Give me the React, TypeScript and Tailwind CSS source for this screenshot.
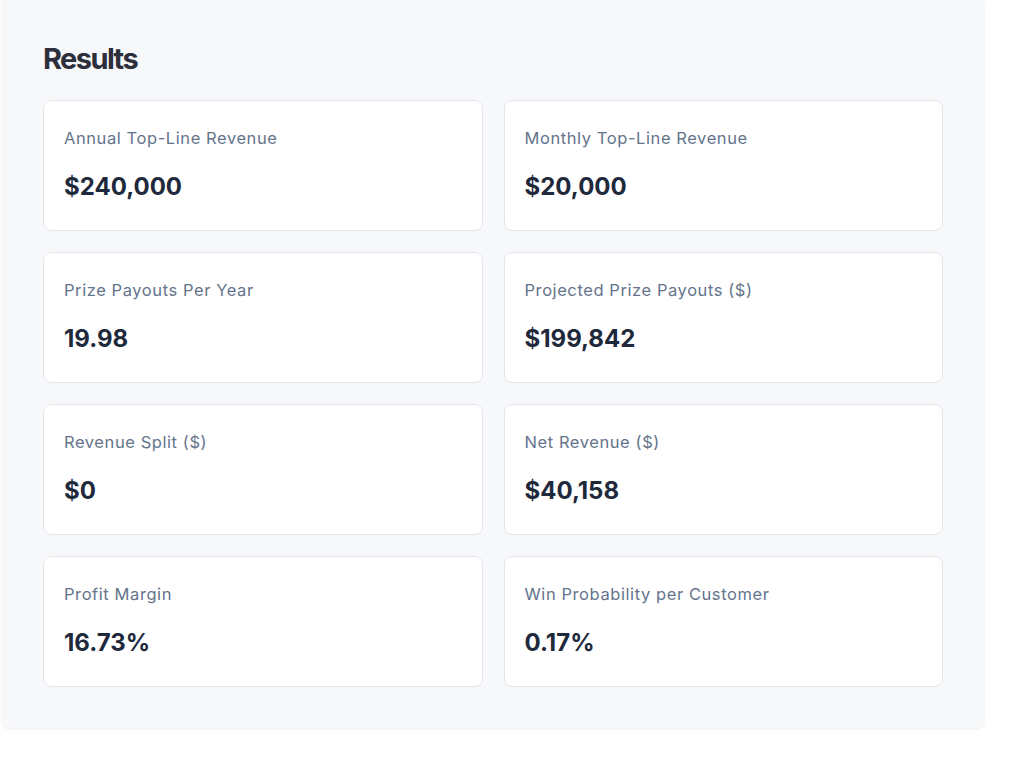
const results = [
  { label: "Annual Top-Line Revenue", value: "$240,000" },
  { label: "Monthly Top-Line Revenue", value: "$20,000" },
  { label: "Prize Payouts Per Year", value: "19.98" },
  { label: "Projected Prize Payouts ($)", value: "$199,842" },
  { label: "Revenue Split ($)", value: "$0" },
  { label: "Net Revenue ($)", value: "$40,158" },
  { label: "Profit Margin", value: "16.73%" },
  { label: "Win Probability per Customer", value: "0.17%" },
];

function ResultCard({ label, value }: { label: string; value: string }) {
  return (
    <div className="h-[131px] rounded-lg border border-[#e3e6ec] bg-white px-5 pt-[25px]">
      <div className="text-[16.5px] leading-6 tracking-[0.035em] text-[#64748b]">{label}</div>
      <div className="mt-[21px] text-[24px] leading-8 font-bold text-[#1e293b]">{value}</div>
    </div>
  );
}

export default function App() {
  return (
    <div className="min-h-[762px] bg-white font-['Inter',sans-serif]">
      <div className="ml-[2px] w-[982px] rounded-b-lg bg-[#f7f8fa] px-[41px] pt-[38px] pb-[41px] shadow-[0_1px_3px_rgba(0,0,0,0.08)]">
        <h2 className="mb-[20px] text-[29px] leading-[42px] font-bold tracking-[-0.055em] text-[#2e2f3c]">
          Results
        </h2>
        <div className="grid grid-cols-2 gap-x-[21px] gap-y-[21px]">
          {results.map((r) => (
            <ResultCard key={r.label} label={r.label} value={r.value} />
          ))}
        </div>
      </div>
    </div>
  );
}
